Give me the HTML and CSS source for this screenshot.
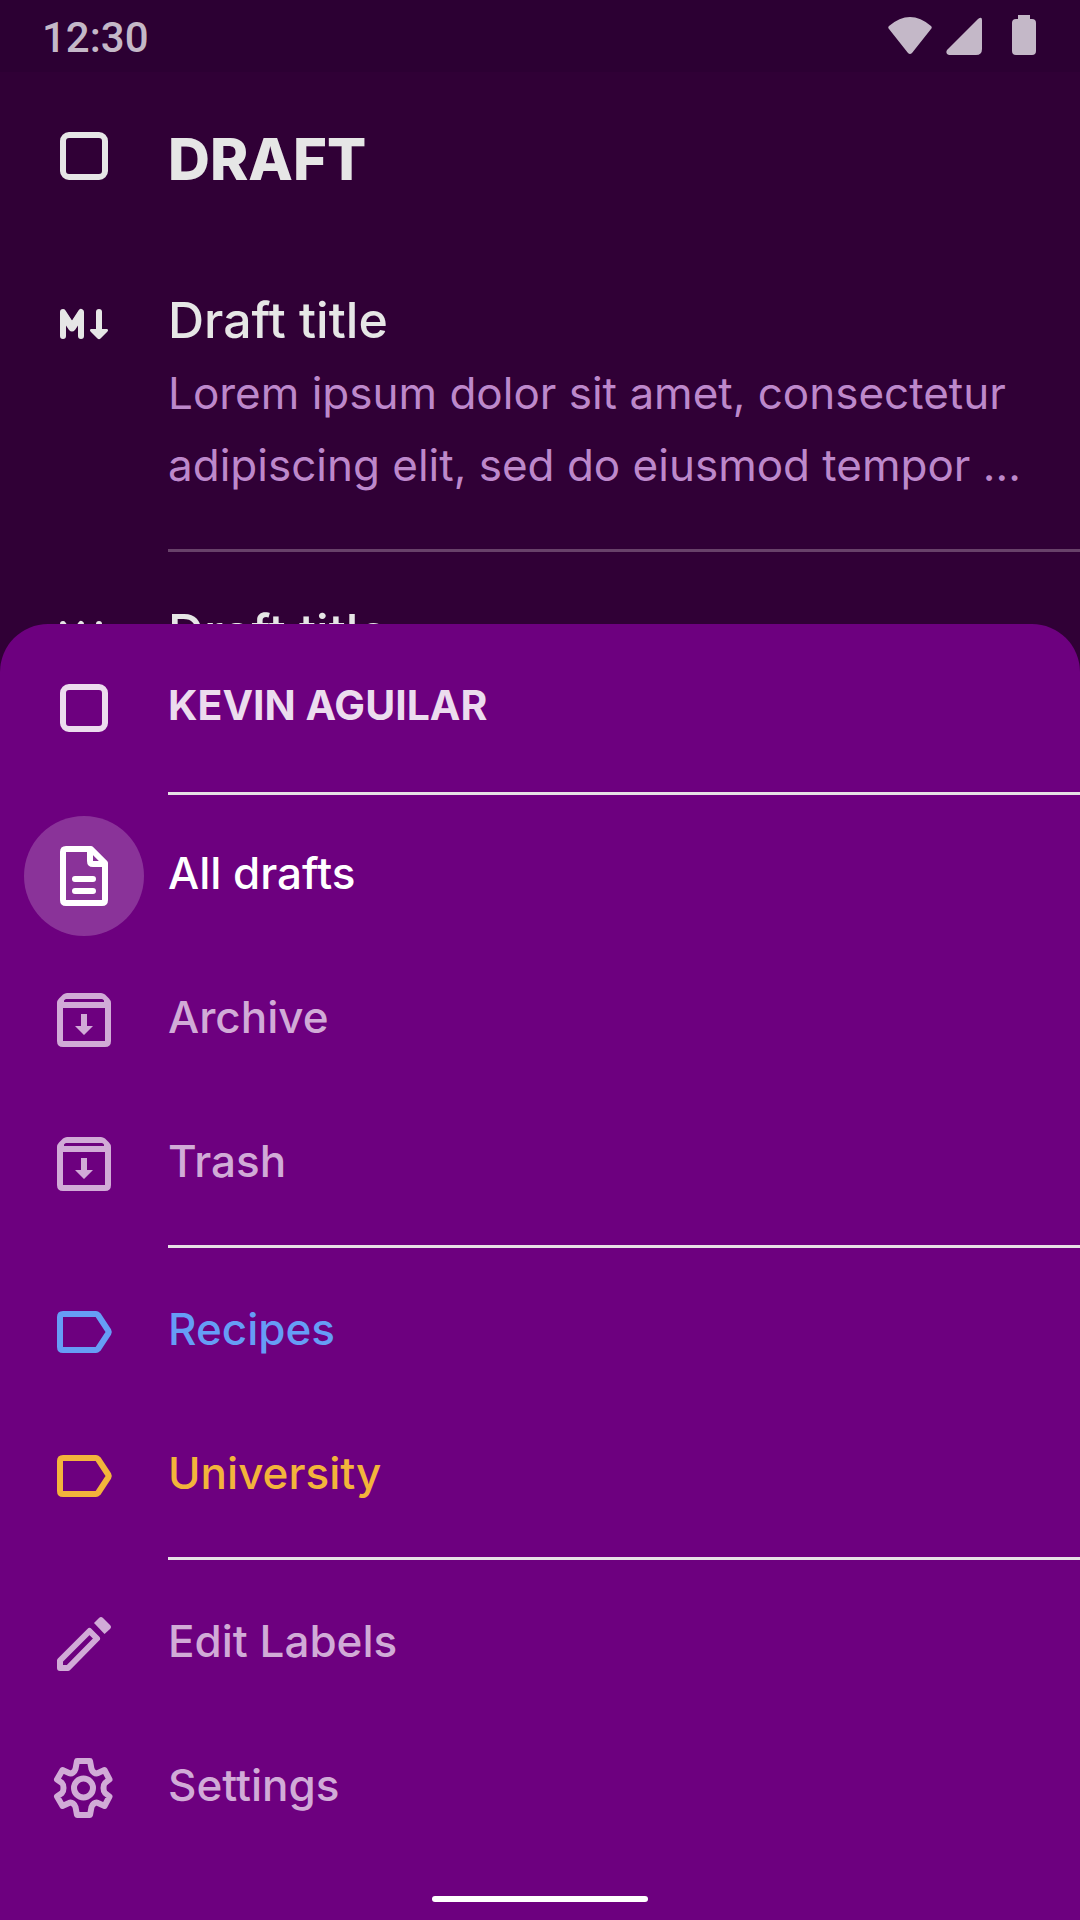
FILE: index.html
```html
<!DOCTYPE html>
<html lang="en">
<head>
<meta charset="utf-8">
<meta name="viewport" content="width=device-width, initial-scale=1">
<title>Drafts</title>
<link rel="stylesheet" href="styles.css">
</head>
<body>
<svg class="defs" aria-hidden="true">
  <symbol id="markdown" viewBox="0 0 72 72">
    <g fill="none" stroke="currentColor" stroke-width="6" stroke-linecap="round" stroke-linejoin="round">
      <path d="M15 48V24L24 38L33 24V48"/><path d="M51 24V44"/>
    </g>
    <path fill="currentColor" d="M15 23h2l7 10 7-10h2v10l-6 9q-3 3-6 0l-6-9zM43.500 41h15q2.500 0 1 2.500l-7 7q-1.500 1.500-3 0l-7-7q-1.500-2.500 1-2.500z"/>
  </symbol>
  <symbol id="archive" viewBox="0 0 72 72">
    <path fill="currentColor" fill-rule="evenodd" d="M19 9H53q2 0 4 1.500L61 14.500q2 2 2 4.500V57q0 6-6 6H15q-6 0-6-6V19q0-2.500 2-4.500L15 10.500q2-1.500 4-1.500zM18 15q-1 0-2 1.500V18H56V16.500Q55 15 54 15zM15 24V57H57V24zM33 30h6V42h6l-9 9-9-9h6z"/>
  </symbol>
  <symbol id="label" viewBox="0 0 72 72">
    <path fill="none" stroke="currentColor" stroke-width="6" stroke-linejoin="round" d="M15 18H48q1 0 2 1L60.500 35q.6 1 0 2L50 53q-1 1-2 1H15q-3 0-3-3V21q0-3 3-3z"/>
  </symbol>
</svg>
<div class="screen">
  <header class="status">
    <span class="time">12:30</span>
    <svg class="signals" viewBox="0 0 150 48" fill="currentColor" aria-hidden="true">
      <path d="M1 12Q22-6 43 12q1.500 1.500 0 3L24 39q-2 2-4 0L1 15q-1.500-1.500 0-3zM59 36L90 5q4-3 4 1V35q0 6-6 6H61q-4-1-2-5zM130 1h12v4h2q4 0 4 4V37q0 4-4 4H128q-4 0-4-4V9q0-4 4-4h2z"/>
    </svg>
  </header>
  <main class="drafts">
    <div class="appbar"><span class="box"></span><h1>DRAFT</h1></div>
    <article class="draft">
      <svg class="icon"><use href="#markdown"/></svg>
      <div class="body">
        <h2>Draft title</h2>
        <p>Lorem ipsum dolor sit amet, consectetur adipiscing elit, sed do eiusmod tempor ...</p>
      </div>
    </article>
    <article class="draft">
      <svg class="icon"><use href="#markdown"/></svg>
      <div class="body"><h2>Draft title</h2></div>
    </article>
  </main>
  <nav class="sheet">
    <div class="account"><span class="box"></span><strong>KEVIN AGUILAR</strong></div>
    <div class="group">
      <a class="item active" href="#drafts">
        <span class="badge"><svg class="icon" viewBox="0 0 72 72" fill="none" stroke="currentColor" stroke-width="6" stroke-linecap="round" stroke-linejoin="round"><path d="M43 9H18q-3 0-3 3V60q0 3 3 3H54q3 0 3-3V23zM42 10V21q0 3 3 3H56M27 39H45M27 51H45"/></svg></span>
        <span>All drafts</span>
      </a>
      <a class="item" href="#archive"><span class="badge"><svg class="icon"><use href="#archive"/></svg></span><span>Archive</span></a>
      <a class="item" href="#trash"><span class="badge"><svg class="icon"><use href="#archive"/></svg></span><span>Trash</span></a>
    </div>
    <div class="group">
      <a class="item blue" href="#recipes"><span class="badge"><svg class="icon"><use href="#label"/></svg></span><span>Recipes</span></a>
      <a class="item yellow" href="#university"><span class="badge"><svg class="icon"><use href="#label"/></svg></span><span>University</span></a>
    </div>
    <div class="group">
      <a class="item" href="#labels">
        <span class="badge"><svg class="icon" viewBox="0 0 72 72"><path fill="none" stroke="currentColor" stroke-width="6" stroke-linejoin="round" d="M12 60V52.500L41.500 23L49 30.500L20 60z"/><path fill="currentColor" d="M46 15L51 10q2-2 4 0l7 7q2 2 0 4L56.500 26z"/></svg></span>
        <span>Edit Labels</span>
      </a>
      <a class="item" href="#settings">
        <span class="badge"><svg class="icon" viewBox="0 0 72 72" fill="none" stroke="currentColor" stroke-width="6" stroke-linejoin="round"><path d="M29 9H42L43.500 17Q44 19 46 20.500T50 21L56.500 18L61.500 27.500L57 31Q55.500 32.500 55.500 36T57 41L61.500 44.500L56.500 54L50 51Q48 50 46 51.500T43.500 55L42 63H29L27.500 55Q27 53 25 51.500T21 51L14.500 54L9 44.500L14 41Q15.500 39.500 15.500 36T14 31L9 27.500L14.500 18L21 21Q23 22 25 20.500T27.500 17z"/><circle cx="35.500" cy="36" r="9.500"/></svg></span>
        <span>Settings</span>
      </a>
    </div>
    <div class="home"></div>
  </nav>
</div>
</body>
</html>
```
FILE: styles.css
```css
* { box-sizing: border-box; }
body { margin: 0; background: #300036; font-family: Inter, "Liberation Sans", sans-serif; }
h1, h2, p { margin: 0; }
.defs { position: absolute; width: 0; height: 0; }
.screen { min-height: 100vh; display: flex; flex-direction: column; }
.status { height: 72px; padding: 4px 42px 0; display: flex; align-items: center; justify-content: space-between; background: #2c0033; color: #c4b8c8; }
.time { font: 500 42px/48px Roboto, sans-serif; }
.signals { width: 150px; height: 48px; }
.drafts { flex: 1 0 552px; height: 552px; overflow: hidden; color: #e6e6e6; }
.icon { display: block; flex: none; width: 72px; height: 72px; }
.box { flex: none; width: 48px; height: 48px; margin: 0 60px; border: 6px solid currentColor; border-radius: 9px; }
.appbar { display: flex; align-items: center; height: 168px; }
.appbar h1 { font-size: 58px; line-height: 72px; font-weight: 800; padding-top: 6px; }
.draft { display: flex; gap: 48px; padding: 48px 0 0 48px; }
.body { flex: 1; height: 264px; border-bottom: 3px solid #674169; }
.draft h2 { font-size: 50px; line-height: 64px; padding-bottom: 5px; font-weight: 500; }
.draft p { font-size: 44px; line-height: 72px; color: #bd88cb; padding-right: 24px; }
.sheet { background: #6d007f; color: #d1abd7; border-radius: 48px 48px 0 0; }
.account { display: flex; align-items: center; height: 168px; font-size: 41px; color: #ecdcee; }
.account strong { padding-bottom: 6px; }
.group { padding: 12px 0 9px; }
.group::before { content: ""; display: block; height: 3px; margin: -12px 0 12px 168px; background: #e6e0e6; }
.account + .group { padding-top: 9px; }
.account + .group::before { margin: -9px 0 9px 168px; }
.item { display: flex; align-items: center; gap: 24px; height: 144px; padding-left: 24px; color: inherit; text-decoration: none; font-size: 44px; line-height: 60px; font-weight: 500; }
.badge { display: grid; place-items: center; width: 120px; height: 120px; border-radius: 50%; }
.badge + span { padding-bottom: 6px; }
.active { color: #fff; }
.active .badge { background: #8a3399; }
.blue { color: #669df6; }
.yellow { color: #f3b43b; }
.home { width: 216px; height: 6px; margin: 27px auto 18px; border-radius: 3px; background: #fff; }
```
